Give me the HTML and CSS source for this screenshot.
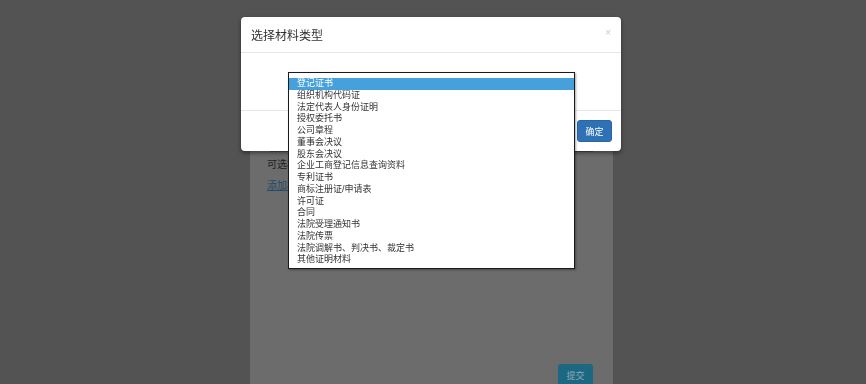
FILE: index.html
```html
<!DOCTYPE html>
<html lang="zh">
<head>
<meta charset="utf-8">
<link rel="stylesheet" href="styles.css">
</head>
<body>
<div class="page">
  <div class="card">
    <div class="card-line"></div>
    <p class="hint">可选材料类型</p>
    <a class="add-link">添加材料</a>
    <div class="card-foot"><span class="submit">提交</span></div>
  </div>
</div>

<div class="modal">
  <div class="modal-header">
    <h4 class="modal-title">选择材料类型</h4>
    <span class="close">×</span>
  </div>
  <div class="modal-body"></div>
  <div class="modal-footer"><span class="btn-ok">确定</span></div>

  <ul class="dropdown">
    <li class="selected">登记证书</li>
    <li>组织机构代码证</li>
    <li>法定代表人身份证明</li>
    <li>授权委托书</li>
    <li>公司章程</li>
    <li>董事会决议</li>
    <li>股东会决议</li>
    <li>企业工商登记信息查询资料</li>
    <li>专利证书</li>
    <li>商标注册证/申请表</li>
    <li>许可证</li>
    <li>合同</li>
    <li>法院受理通知书</li>
    <li>法院传票</li>
    <li>法院调解书、判决书、裁定书</li>
    <li>其他证明材料</li>
  </ul>
</div>
</body>
</html>
```

FILE: styles.css
```css
* { box-sizing: border-box; }
html, body {
  margin: 0;
  padding: 0;
  height: 100%;
  overflow: hidden;
}
body {
  background: #535353;
  font-family: "Liberation Sans", "Noto Sans CJK SC", sans-serif;
}
.page {
  display: flex;
  height: 384px;
  padding-left: 250px;
}
.card {
  width: 363px;
  margin-top: 130px;
  background: #6c6c6c;
  padding: 0 17px;
  display: flex;
  flex-direction: column;
}
.card-line {
  height: 22px;
  border-bottom: 1px solid #4a4a4a;
  margin: 0 3px;
}
.hint {
  margin: 6px 0 0;
  width: 21px;
  overflow: hidden;
  white-space: nowrap;
  font-size: 10px;
  line-height: 14px;
  color: #1e1e1e;
}
.add-link {
  margin-top: 7px;
  width: 21px;
  overflow: hidden;
  white-space: nowrap;
  font-size: 10px;
  line-height: 14px;
  color: #24486b;
  text-decoration: underline;
}
.card-foot {
  margin-top: auto;
  display: flex;
  justify-content: flex-end;
  padding-right: 3px;
}
.submit {
  width: 35px;
  height: 22px;
  margin-bottom: -2px;
  background: #1c6882;
  border-radius: 3px;
  color: #8fa9b3;
  font-size: 9px;
  display: flex;
  align-items: center;
  justify-content: center;
}

.modal {
  position: fixed;
  left: 241px;
  top: 17px;
  width: 380px;
  height: 134px;
  background: #fff;
  border-radius: 4px;
  box-shadow: 0 2px 4px rgba(0,0,0,0.45);
  display: flex;
  flex-direction: column;
}
.modal-header {
  height: 36px;
  border-bottom: 1px solid #e6e6e6;
  display: flex;
  align-items: center;
  justify-content: space-between;
  padding: 0 10px 0 10px;
}
.modal-title {
  margin: 0;
  font-size: 12px;
  font-weight: normal;
  color: #333;
}
.close {
  font-size: 10px;
  color: #c8c8c8;
  margin-top: -4px;
}
.modal-body {
  height: 58px;
  border-bottom: 1px solid #e6e6e6;
}
.modal-footer {
  flex: 1;
  display: flex;
  justify-content: flex-end;
  align-items: center;
  padding-right: 9px;
}
.btn-ok {
  width: 35px;
  height: 22px;
  background: #2f71b5;
  border: 1px solid #2a64a3;
  border-radius: 3px;
  color: #fff;
  font-size: 9px;
  display: flex;
  align-items: center;
  justify-content: center;
}
.dropdown {
  position: absolute;
  left: 47px;
  top: 55px;
  width: 287px;
  height: 197px;
  margin: 0;
  padding: 5px 0 0;
  list-style: none;
  background: #fff;
  border: 1px solid #1a1a1a;
  box-shadow: 1px 1px 2px rgba(0,0,0,0.35);
}
.dropdown li {
  height: 11.75px;
  line-height: 11.75px;
  font-size: 9px;
  color: #333;
  padding-left: 8px;
  white-space: nowrap;
}
.dropdown li.selected {
  background: #45a0db;
  color: #fff;
}
```
